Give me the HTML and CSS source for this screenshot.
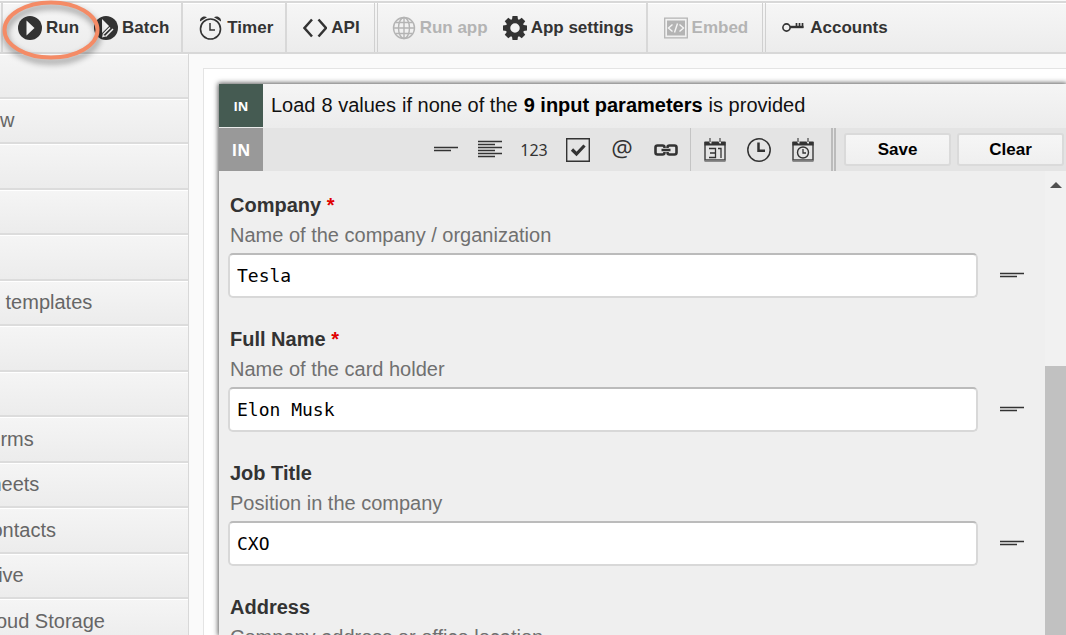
FILE: index.html
```html
<!DOCTYPE html>
<html lang="en">

<head>
    <meta charset="UTF-8">
    <meta name="viewport" content="width=device-width, initial-scale=1.0">
    <title>Input parameters</title>
    <link rel="stylesheet" href="styles.css">
</head>

<body>
    <!-- shared shapes -->
    <svg class="defs" width="0" height="0" aria-hidden="true">
        <symbol id="line" viewBox="0 0 24 24">
            <path d="M0 9.500h24M0 12.500h17" stroke="#333" stroke-width="1.500" />
        </symbol>
        <symbol id="calendar" viewBox="0 0 24 24">
            <path d="M2 4v18h20V4" fill="none" stroke="#444" stroke-width="1.500" />
            <path d="M1.500 23.200h21" stroke="#888" stroke-width="1.500" />
            <path d="M1.500 3.500h4.500l1 2h1.500V3.500h7l1 2H18V3.500h4.500v4h-21z" fill="#333" />
            <path d="M7 0v4M17 0v4" stroke="#666" stroke-width="1.500" />
        </symbol>
    </svg>

    <header class="toolbar">
        <div class="group first">
            <button class="tool"><svg width="24" height="24" viewBox="0 0 24 24">
                    <circle cx="12" cy="12" r="12" fill="#333" />
                    <path d="M8.500 4.500 16.500 12 8.500 19.500z" fill="#f3f3f3" />
                </svg>Run</button>
            <button class="tool"><svg width="24" height="24" viewBox="0 0 24 24">
                    <circle cx="12" cy="12" r="12" fill="#333" />
                    <path d="M8 3 16.500 11.500 8 19z" fill="#f3f3f3" />
                    <path d="m8.500 20.500 9.500-9.500" stroke="#333" stroke-width="5.500" />
                    <path d="m9 18.500 7-7M11.500 20.500l7.500-7.500" stroke="#f3f3f3" stroke-width="1.500" />
                    <path d="m8 21.500.8-3.500 2.800 2.500z" fill="#f3f3f3" />
                </svg>Batch</button>
        </div>
        <div class="group">
            <button class="tool"><svg width="24" height="24" viewBox="0 0 24 24">
                    <circle cx="11.500" cy="13" r="10" fill="none" stroke="#333" stroke-width="1.600" />
                    <path d="M11 7v7h5" fill="none" stroke="#333" stroke-width="1.500" />
                    <path d="M1 5.500C.5 1.500 5 -.8 8 1.200zM22 5.500C22.500 1.500 18 -.8 15 1.200z" fill="#333" />
                </svg>Timer</button>
        </div>
        <div class="group double">
            <button class="tool"><svg width="24" height="24" viewBox="0 0 24 24">
                    <path d="M9 3.500 1.500 12 9 20.500M15.500 3.500 23 12l-7.500 8.500" fill="none" stroke="#333" stroke-width="2.500" />
                </svg>API</button>
        </div>
        <div class="group apps">
            <button class="tool" disabled><svg width="24" height="24" viewBox="0 0 24 24" fill="none" stroke="#b4b4b4" stroke-width="1.400">
                    <circle cx="12" cy="12" r="10.500" />
                    <ellipse cx="12" cy="12" rx="5.500" ry="10.500" />
                    <path d="M12 1.500v21M1.500 12h21M3.500 6.500h17M3.500 17.500h17" />
                </svg>Run app</button>
            <button class="tool"><svg width="24" height="24" viewBox="0 0 24 24">
                    <g fill="#333">
                        <path d="M9.500 0h5l.7 5H8.800zM9.500 24h5l.7-5H8.800z" />
                        <path d="M9.500 0h5l.7 5H8.800zM9.500 24h5l.7-5H8.800z" transform="rotate(45 12 12)" />
                        <path d="M9.500 0h5l.7 5H8.800zM9.500 24h5l.7-5H8.800z" transform="rotate(90 12 12)" />
                        <path d="M9.500 0h5l.7 5H8.800zM9.500 24h5l.7-5H8.800z" transform="rotate(135 12 12)" />
                    </g>
                    <circle cx="12" cy="12" r="7" fill="#f2f2f2" stroke="#333" stroke-width="4.500" />
                </svg>App settings</button>
        </div>
        <div class="group double">
            <button class="tool" disabled><svg width="24" height="24" viewBox="0 0 24 24">
                    <path d="M.7 2.200h22.600v19.600H.7z" fill="none" stroke="#b4b4b4" stroke-width="1.300" />
                    <path d="M3 4.500h18v15H3z" fill="#b4b4b4" />
                    <path d="m8.500 8.500-4 3.500 4 3.500M15.500 8.500l4 3.500-4 3.500M13.500 7.500l-3 9" fill="none" stroke="#f5f5f5" stroke-width="1.400" />
                </svg>Embed</button>
        </div>
        <div class="group last">
            <button class="tool"><svg width="24" height="24" viewBox="0 0 24 24">
                    <circle cx="4.500" cy="11.500" r="3.600" fill="none" stroke="#333" stroke-width="1.600" />
                    <path d="M8 11h13.500" stroke="#333" stroke-width="2.400" />
                    <path d="M14.500 7v5M17.500 7v5M20.500 7v5" stroke="#333" stroke-width="1.700" />
                </svg>Accounts</button>
        </div>
        <svg class="highlight" width="108" height="72" viewBox="0 0 108 72" aria-hidden="true">
            <ellipse cx="50" cy="30" rx="46.500" ry="27.500" fill="none" stroke="#f48b66" stroke-width="4" />
        </svg>
    </header>

    <div class="page">
        <nav class="sidebar">
            <a href="#"></a>
            <a href="#">w</a>
            <a href="#"></a>
            <a href="#"></a>
            <a href="#"></a>
            <a href="#">&nbsp;templates</a>
            <a href="#"></a>
            <a href="#"></a>
            <a href="#"><span class="service">Google Forms</span></a>
            <a href="#"><span class="service">Google Sheets</span></a>
            <a href="#"><span class="service">Google Contacts</span></a>
            <a href="#"><span class="service">Google Drive</span></a>
            <a href="#"><span class="service">Google Cloud Storage</span></a>
        </nav>

        <main class="card">
            <section class="panel">
                <div class="summary">
                    <span class="tag dark">IN</span>
                    <p><span>Load</span><span>8 values</span><span>if none of the</span><b>9 input parameters</b><span>is provided</span></p>
                </div>
                <div class="types">
                    <span class="tag">IN</span>
                    <div class="icons">
                        <button class="type" aria-label="Line"><svg width="24" height="24"><use href="#line" /></svg></button>
                        <button class="type" aria-label="Paragraph"><svg width="24" height="24" viewBox="0 0 24 24">
                                <path d="M0 3.500h24M0 6.500h17M0 9.500h24M0 12.500h17M0 15.500h24M0 18.500h17" stroke="#333" stroke-width="1.400" />
                            </svg></button>
                        <button class="type number">123</button>
                        <button class="type" aria-label="Checkbox"><svg width="24" height="24" viewBox="0 0 24 24">
                                <path d="M.7.7h22.600v22.600H.7z" fill="none" stroke="#333" stroke-width="1.400" />
                                <path d="m6 11.500 4.500 4.500 8-8.500" fill="none" stroke="#333" stroke-width="3.200" />
                            </svg></button>
                        <button class="type at">@</button>
                        <button class="type" aria-label="Link"><svg width="24" height="24" viewBox="0 0 24 24">
                                <path d="M10.500 10V9.500q0-2-2-2H3.500q-2 0-2 2v5q0 2 2 2h5q2 0 2-2V14M13.500 10v-.5q0-2 2-2h5q2 0 2 2v5q0 2-2 2h-5q-2 0-2-2V14M7.500 12h9" fill="none" stroke="#333" stroke-width="2.600" />
                            </svg></button>
                    </div>
                    <div class="icons dates">
                        <button class="type" aria-label="Date"><svg width="24" height="24" viewBox="0 0 24 24">
                                <use href="#calendar" />
                                <path d="M6 10.500h6.500v9H6M7 15h5.500M15 10.500h3v9.500" fill="none" stroke="#333" stroke-width="1.300" />
                            </svg></button>
                        <button class="type" aria-label="Time"><svg width="24" height="24" viewBox="0 0 24 24">
                                <circle cx="12" cy="12" r="11.200" fill="none" stroke="#333" stroke-width="1.500" />
                                <path d="M11.500 4.500v8.300H18" fill="none" stroke="#333" stroke-width="2.500" />
                            </svg></button>
                        <button class="type" aria-label="Date and time"><svg width="24" height="24" viewBox="0 0 24 24">
                                <use href="#calendar" />
                                <circle cx="12" cy="14.500" r="5.500" fill="none" stroke="#333" stroke-width="1.400" />
                                <path d="M12 11v4h3" fill="none" stroke="#333" stroke-width="1.300" />
                            </svg></button>
                    </div>
                    <div class="actions">
                        <button class="action">Save</button>
                        <button class="action">Clear</button>
                    </div>
                </div>

                <div class="body">
                    <form class="fields">
                        <div class="field">
                            <label for="company">Company <em>*</em></label>
                            <p>Name of the company / organization</p>
                            <div class="entry"><input type="text" id="company" value="Tesla"><svg width="24" height="24"><use href="#line" /></svg></div>
                        </div>
                        <div class="field">
                            <label for="name">Full Name <em>*</em></label>
                            <p>Name of the card holder</p>
                            <div class="entry"><input type="text" id="name" value="Elon Musk"><svg width="24" height="24"><use href="#line" /></svg></div>
                        </div>
                        <div class="field">
                            <label for="job">Job Title</label>
                            <p>Position in the company</p>
                            <div class="entry"><input type="text" id="job" value="CXO"><svg width="24" height="24"><use href="#line" /></svg></div>
                        </div>
                        <div class="field">
                            <label for="address">Address</label>
                            <p>Company address or office location</p>
                            <div class="entry"><input type="text" id="address"><svg width="24" height="24"><use href="#line" /></svg></div>
                        </div>
                    </form>
                    <div class="scrollbar">
                        <svg width="12" height="6" viewBox="0 0 12 6"><path d="M0 6 6 0l6 6z" fill="#505050" /></svg>
                        <div class="thumb"></div>
                    </div>
                </div>
            </section>
        </main>
    </div>
</body>

</html>
```
FILE: styles.css
```css
* {
    margin: 0;
    padding: 0;
    box-sizing: border-box;
}

body {
    height: 100vh;
    display: flex;
    flex-direction: column;
    overflow: hidden;
    background: #fafafa;
    color: #333;
    font-family: "Liberation Sans", Arial, sans-serif;
    font-size: 20px;
}

button {
    border: none;
    background: none;
    font-family: inherit;
    color: #333;
}

svg {
    display: block;
    flex: none;
}

.defs {
    position: absolute;
}

/* top toolbar */
.toolbar {
    position: relative;
    display: flex;
    flex: none;
    height: 53px;
    margin-top: 1px;
    border-top: 2px solid #d8d8d8;
    border-bottom: 2px solid #d8d8d8;
    background: linear-gradient(#f6f6f6, #ececec);
    box-shadow: inset 0 1px #fff;
}

.group {
    display: flex;
    gap: 15px;
    padding: 1px 12px 0 16px;
    border-right: 2px solid #d8d8d8;
}

.first {
    margin-left: 1px;
    border-left: 2px solid #d8d8d8;
    padding-left: 15px;
}

.double {
    padding-right: 14px;
    border-right: 4px double #d0d0d0;
}

.apps {
    padding-left: 14px;
}

.last {
    border-right: none;
}

.tool {
    display: flex;
    align-items: center;
    gap: 4px;
    font-size: 17px;
    font-weight: bold;
}

.tool:disabled {
    color: #b4b4b4;
}

.highlight {
    position: absolute;
    left: 1px;
    top: -3px;
    filter: drop-shadow(1px 4px 3px rgba(0, 0, 0, .45));
}

/* left menu */
.page {
    flex: 1;
    min-height: 0;
    display: flex;
}

.sidebar {
    flex: none;
    width: 189px;
    overflow: hidden;
    border-right: 1px solid #d8d8d8;
}

.sidebar a {
    display: flex;
    align-items: center;
    height: 46px;
    border-bottom: 2px solid #dcdcdc;
    background: linear-gradient(#f5f5f5, #ececec);
    box-shadow: inset 0 1px #fff;
    color: #666;
    text-decoration: none;
}

.sidebar a:nth-child(even) {
    height: 45px;
}

.sidebar a:first-child {
    height: 45px;
}

.service {
    flex: none;
    margin-left: -93px;
}

/* parameters panel */
.card {
    flex: 1;
    min-width: 0;
    display: flex;
    margin: 14px 0 0 14px;
    padding: 15px 0 0 15px;
    border: 1px solid #e4e4e4;
    border-width: 1px 0 0 1px;
    background: #fff;
}

.panel {
    flex: 1;
    min-width: 0;
    display: flex;
    flex-direction: column;
    background: #efefef;
    box-shadow: 0 0 5px 1px rgba(0, 0, 0, .65);
}

.tag {
    display: grid;
    place-items: center;
    width: 44px;
    background: #999;
    color: #fff;
    font-family: "Open Sans", sans-serif;
    font-size: 16px;
    font-weight: bold;
}

.dark {
    background: #455b52;
    font-size: 13px;
}

.summary {
    flex: none;
    display: flex;
    height: 44px;
    border-bottom: 1px solid #ececec;
    background: linear-gradient(#f5f5f5, #ececec);
    color: #111;
}

.summary p {
    display: flex;
    align-items: center;
    gap: 6px;
    padding-left: 8px;
}

.summary b {
    color: #000;
}

.types {
    flex: none;
    display: flex;
    height: 43px;
    background: #e4e4e4;
}

.icons {
    display: flex;
    margin-left: auto;
}

.type {
    display: grid;
    place-items: center;
    width: 44px;
}

.number {
    font-family: "Noto Sans", sans-serif;
    font-size: 16px;
}

.at {
    padding-bottom: 4px;
    font-family: "Open Sans", sans-serif;
    font-size: 24px;
}

.dates {
    margin-left: 2px;
    padding: 0 6px 0 2px;
    border-left: 1px solid #c4c4c4;
}

.actions {
    display: flex;
    align-items: center;
    gap: 6px;
    padding: 0 2px 0 8px;
    border-left: 5px double #bbb;
}

.action {
    width: 107px;
    height: 33px;
    border: 2px solid #dadada;
    border-radius: 3px;
    background: linear-gradient(#f6f6f6, #efefef);
    color: #000;
    font-size: 17px;
    font-weight: bold;
}

.body {
    flex: 1;
    min-height: 0;
    display: flex;
}

.fields {
    flex: 1;
    min-width: 0;
    overflow: hidden;
    padding: 19px 21px 0 9px;
}

.field {
    margin-bottom: 26px;
    line-height: 30px;
}

.field label {
    display: block;
    padding-left: 2px;
    font-weight: bold;
}

.field em {
    color: #e00000;
    font-style: normal;
}

.field p {
    margin-bottom: 3px;
    padding-left: 2px;
    color: #707070;
}

.entry {
    display: flex;
    align-items: center;
    gap: 22px;
}

.entry input {
    flex: 1;
    min-width: 0;
    height: 45px;
    padding: 0 7px;
    border: 2px solid #d8d8d8;
    border-top-color: #bbb;
    border-radius: 5px;
    background: #fff;
    color: #000;
    font-family: "DejaVu Sans Mono", monospace;
    font-size: 18px;
}

.scrollbar {
    flex: none;
    display: flex;
    flex-direction: column;
    align-items: center;
    gap: 178px;
    width: 21px;
    padding-top: 11px;
    background: #f1f1f1;
}

.thumb {
    flex: 1;
    width: 100%;
    background: #c1c1c1;
}
```
